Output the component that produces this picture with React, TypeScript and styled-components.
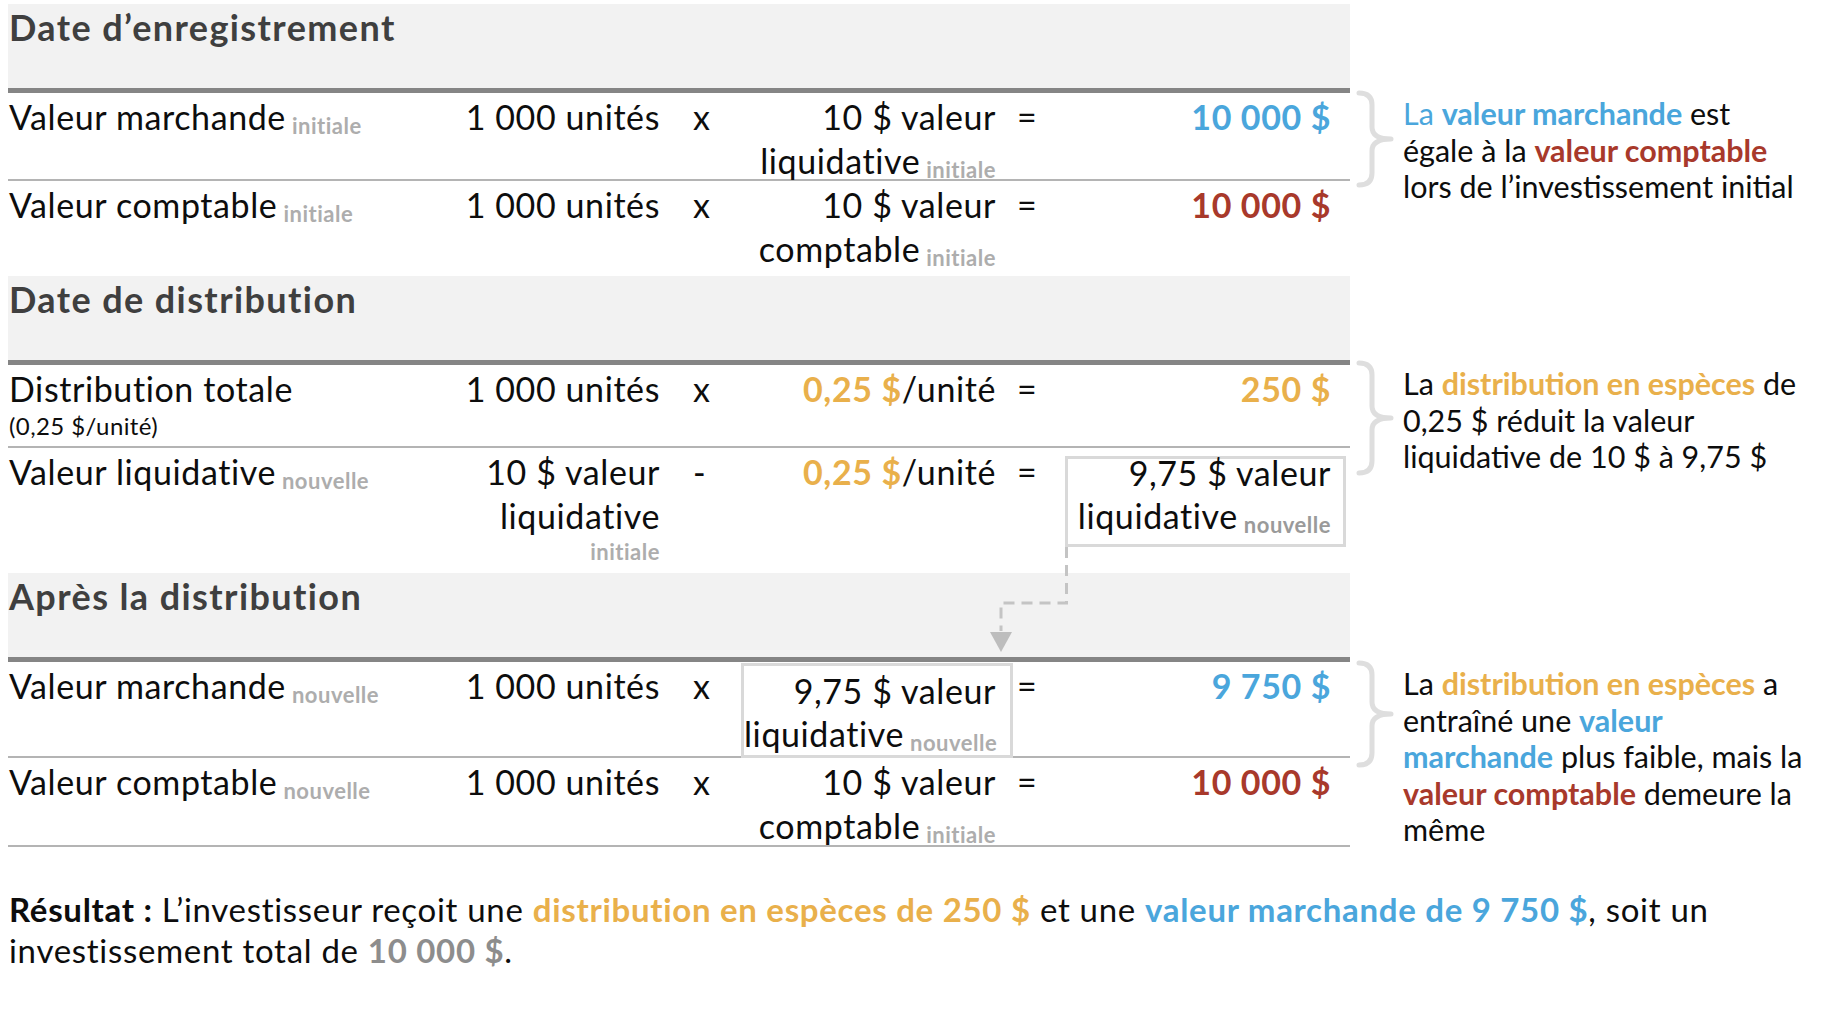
import React from "react";
import styled, { createGlobalStyle } from "styled-components";

const GlobalStyle = createGlobalStyle`
  *, *::before, *::after { box-sizing: border-box; }
  html, body { margin: 0; padding: 0; background: #ffffff; }
  body { font-family: Lato, "Liberation Sans", sans-serif; color: #0d0d0d; }
`;

const BLUE = "#4aa6dc";
const RED = "#a8392b";
const ORANGE = "#e9b04b";

const Page = styled.div`
  position: relative;
  width: 1844px;
  height: 1016px;
  padding: 4px 0 0 8px;
  overflow: hidden;
`;

const Section = styled.section`
  display: grid;
  grid-template-columns: 1342px 1fr;
  align-items: start;
`;

const Header = styled.div`
  grid-column: 1;
  height: 89px;
  padding: 1px 0 0 1px;
  background: #f2f2f2;
  border-bottom: 5px solid #858585;
  font-size: 36px;
  font-weight: 700;
  letter-spacing: 1.4px;
  line-height: 44px;
  color: #3f3f3f;
`;

const Rows = styled.div`
  grid-column: 1;
  grid-row: 2;
`;

const Row = styled.div<{ $h: number; $line?: boolean }>`
  display: grid;
  grid-template-columns: 427px 246px 55px 277px 50px 287px;
  height: ${(p) => p.$h}px;
  border-bottom: ${(p) => (p.$line ? "2px solid #b4b4b4" : "none")};
  font-size: 34px;
  letter-spacing: 0.6px;
  line-height: 44px;
`;

const Label = styled.div`
  padding: 2px 0 0 1px;
`;

const SubLabel = styled.div`
  font-size: 24px;
  letter-spacing: 0.4px;
  line-height: 30px;
`;

const Qty = styled.div`
  padding: 2px 21px 0 0;
  text-align: right;
`;

const Op = styled.div`
  padding: 2px 0 0 12px;
`;

const Mid = styled.div`
  padding: 2px 17px 0 0;
  text-align: right;
`;

const Eq = styled.div`
  padding: 2px 0 0 4px;
`;

const Total = styled.div<{ $color: string }>`
  padding: 2px 19px 0 0;
  text-align: right;
  font-weight: 700;
  color: ${(p) => p.$color};
`;

const Tag = styled.span<{ $tone?: string }>`
  margin-left: 6px;
  font-size: 22px;
  font-weight: 700;
  letter-spacing: 0.5px;
  line-height: 1;
  vertical-align: -4px;
  color: ${(p) => p.$tone || "#adadad"};
`;

const TagLine = styled.div`
  font-size: 22px;
  font-weight: 700;
  letter-spacing: 0.5px;
  line-height: 28px;
  color: #adadad;
`;

const ValueBox = styled.div<{ $mt: number; $h: number; $ml: number; $mr: number; $pr: number }>`
  height: ${(p) => p.$h}px;
  margin: ${(p) => `${p.$mt}px ${p.$mr}px 0 ${p.$ml}px`};
  padding: 0 ${(p) => p.$pr}px 0 0;
  border: 3px solid #d9d9d9;
  text-align: right;
  line-height: 43px;
`;

const BoxText = styled.div<{ $shift: number }>`
  margin-top: ${(p) => p.$shift}px;
`;

const Hl = styled.span<{ $color: string; $bold?: boolean }>`
  color: ${(p) => p.$color};
  font-weight: ${(p) => (p.$bold ? 700 : 400)};
`;

const Aside = styled.aside<{ $mt: number }>`
  grid-column: 2;
  grid-row: 2;
  display: flex;
  align-items: flex-start;
  margin-top: ${(p) => p.$mt}px;
  padding-left: 6px;
`;

const Note = styled.p`
  margin: 0;
  padding: 5px 0 0 9px;
  font-size: 30.5px;
  line-height: 36.5px;
  color: #0d0d0d;
  white-space: nowrap;
`;

const Result = styled.p`
  margin: 41px 0 0 1px;
  font-size: 33px;
  letter-spacing: 0.7px;
  line-height: 41px;
  color: #0d0d0d;
`;

const Connector = styled.svg`
  position: absolute;
  left: 985px;
  top: 545px;
  pointer-events: none;
`;

function Brace({ h }: { h: number }) {
  const m = h / 2;
  const d = `M3 3 Q16 3 16 15 L16 ${m - 12} Q16 ${m} 35 ${m} Q16 ${m} 16 ${m + 12} L16 ${h - 15} Q16 ${h - 3} 3 ${h - 3}`;
  return (
    <svg width="38" height={h} viewBox={`0 0 38 ${h}`}>
      <path d={d} fill="none" stroke="#dedede" strokeWidth="5" strokeLinecap="round" strokeLinejoin="round" />
    </svg>
  );
}

export default function App() {
  return (
    <Page>
      <GlobalStyle />

      <Section>
        <Header>Date d’enregistrement</Header>
        <Rows>
          <Row $h={88} $line>
            <Label>
              Valeur marchande<Tag>initiale</Tag>
            </Label>
            <Qty>1 000 unités</Qty>
            <Op>x</Op>
            <Mid>
              10 $ valeur
              <br />
              liquidative<Tag>initiale</Tag>
            </Mid>
            <Eq>=</Eq>
            <Total $color={BLUE}>10 000 $</Total>
          </Row>
          <Row $h={95}>
            <Label>
              Valeur comptable<Tag>initiale</Tag>
            </Label>
            <Qty>1 000 unités</Qty>
            <Op>x</Op>
            <Mid>
              10 $ valeur
              <br />
              comptable<Tag>initiale</Tag>
            </Mid>
            <Eq>=</Eq>
            <Total $color={RED}>10 000 $</Total>
          </Row>
        </Rows>
        <Aside $mt={-3}>
          <Brace h={98} />
          <Note>
            <Hl $color={BLUE}>La </Hl>
            <Hl $color={BLUE} $bold>
              valeur marchande
            </Hl>{" "}
            est
            <br />
            égale à la{" "}
            <Hl $color={RED} $bold>
              valeur comptable
            </Hl>
            <br />
            lors de l’investissement initial
          </Note>
        </Aside>
      </Section>

      <Section>
        <Header>Date de distribution</Header>
        <Rows>
          <Row $h={83} $line>
            <Label>
              Distribution totale
              <SubLabel>(0,25 $/unité)</SubLabel>
            </Label>
            <Qty>1 000 unités</Qty>
            <Op>x</Op>
            <Mid>
              <Hl $color={ORANGE} $bold>
                0,25 $
              </Hl>
              /unité
            </Mid>
            <Eq>=</Eq>
            <Total $color={ORANGE}>250 $</Total>
          </Row>
          <Row $h={125}>
            <Label>
              Valeur liquidative<Tag>nouvelle</Tag>
            </Label>
            <Qty>
              10 $ valeur
              <br />
              liquidative
              <TagLine>initiale</TagLine>
            </Qty>
            <Op>-</Op>
            <Mid>
              <Hl $color={ORANGE} $bold>
                0,25 $
              </Hl>
              /unité
            </Mid>
            <Eq>=</Eq>
            <ValueBox $mt={8} $h={91} $ml={2} $mr={4} $pr={12}>
              <BoxText $shift={-8}>
                9,75 $ valeur
                <br />
                liquidative<Tag $tone="#9a9a9a">nouvelle</Tag>
              </BoxText>
            </ValueBox>
          </Row>
        </Rows>
        <Aside $mt={-5}>
          <Brace h={116} />
          <Note>
            La{" "}
            <Hl $color={ORANGE} $bold>
              distribution en espèces
            </Hl>{" "}
            de
            <br />
            0,25 $ réduit la valeur
            <br />
            liquidative de 10 $ à 9,75 $
          </Note>
        </Aside>
      </Section>

      <Section>
        <Header>Après la distribution</Header>
        <Rows>
          <Row $h={96} $line>
            <Label>
              Valeur marchande<Tag>nouvelle</Tag>
            </Label>
            <Qty>1 000 unités</Qty>
            <Op>x</Op>
            <ValueBox $mt={1} $h={95} $ml={5} $mr={0} $pr={14}>
              <BoxText $shift={3}>
                9,75 $ valeur
                <br />
                liquidative<Tag>nouvelle</Tag>
              </BoxText>
            </ValueBox>
            <Eq>=</Eq>
            <Total $color={BLUE}>9 750 $</Total>
          </Row>
          <Row $h={89} $line>
            <Label>
              Valeur comptable<Tag>nouvelle</Tag>
            </Label>
            <Qty>1 000 unités</Qty>
            <Op>x</Op>
            <Mid>
              10 $ valeur
              <br />
              comptable<Tag>initiale</Tag>
            </Mid>
            <Eq>=</Eq>
            <Total $color={RED}>10 000 $</Total>
          </Row>
        </Rows>
        <Aside $mt={-2}>
          <Brace h={108} />
          <Note>
            La{" "}
            <Hl $color={ORANGE} $bold>
              distribution en espèces
            </Hl>{" "}
            a
            <br />
            entraîné une{" "}
            <Hl $color={BLUE} $bold>
              valeur
            </Hl>
            <br />
            <Hl $color={BLUE} $bold>
              marchande
            </Hl>{" "}
            plus faible, mais la
            <br />
            <Hl $color={RED} $bold>
              valeur comptable
            </Hl>{" "}
            demeure la
            <br />
            même
          </Note>
        </Aside>
      </Section>

      <Result>
        <b>Résultat :</b> L’investisseur reçoit une{" "}
        <Hl $color={ORANGE} $bold>
          distribution en espèces de 250 $
        </Hl>{" "}
        et une{" "}
        <Hl $color={BLUE} $bold>
          valeur marchande de 9 750 $
        </Hl>
        , soit un
        <br />
        investissement total de{" "}
        <Hl $color="#8d8d8d" $bold>
          10 000 $
        </Hl>
        .
      </Result>

      <Connector width="90" height="110" viewBox="0 0 90 110">
        <path d="M81.5 2 L81.5 58 L16 58 L16 86" fill="none" stroke="#c4c4c4" strokeWidth="3" strokeDasharray="11 7" />
        <polygon points="5,87 27,87 16,107" fill="#bdbdbd" />
      </Connector>
    </Page>
  );
}
